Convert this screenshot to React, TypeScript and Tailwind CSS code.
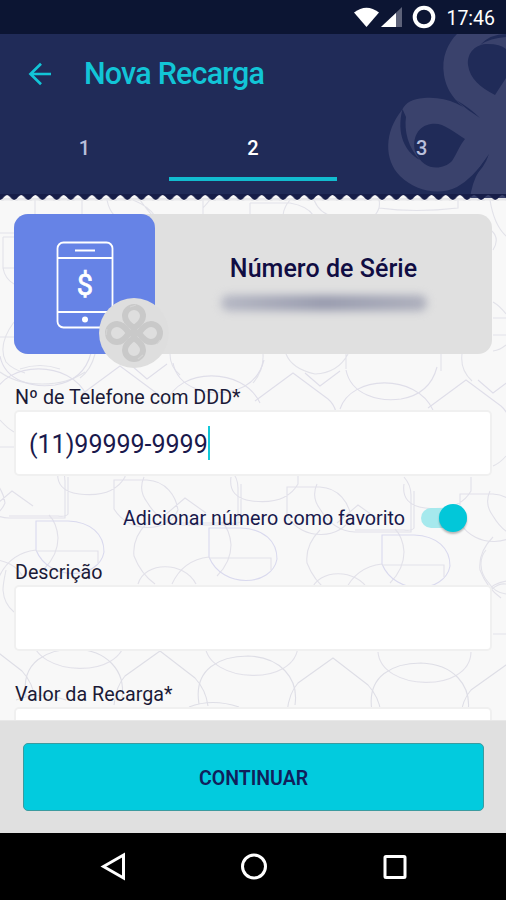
import React from "react";

const REPEATS = [-1, 0, 1, 2];

function Backdrop() {
  return (
    <svg className="h-full w-full" viewBox="0 200 506 520" fill="none" strokeWidth="1.1" aria-hidden="true">
      <g stroke="#e2e2e9">
        <path d="M35 200V215M82 200V215M107 200Q109 210 114 215M133 200Q148 206 155 216M140 200Q147 210 153 216M203 200V215M210 200L203 208" />
        <path d="M250 203H290Q307 206 313 215M250 203V215M283 215Q284 207 290 200M314 200Q320 214 333 216M379 200Q381 208 375 215M379 208Q415 213 458 208V200M490 200Q494 225 506 236M492 231Q500 239 493 250" />
        <path d="M0 233H14M3 237H14M3 237V268H14M3 268Q5 279 14 284M0 337H14M14 322Q-3 345 6 362Q12 369 25 373M20 369Q40 362 60 369M95 354Q91 370 80 378M0 372C22 388 62 388 85 372" />
        <path d="M493 302Q500 306 506 314M493 318H506M493 335H506M493 351Q500 350 506 345" />
        <path d="M170 354Q170 367 180 375M263 354Q264 370 253 383M286 354Q292 369 315 374Q338 373 348 354M346 354V369M441 354V371M462 354Q460 370 472 381" />
        <path d="M0 420Q7 428 14 432M0 447H15M493 466Q500 463 506 456M493 634H506M14 612Q4 604 3 590Q3 584 6 570M492 589Q499 583 506 584M506 594Q495 593 488 582C479 572 479 558 486 550" />
      </g>
      {REPEATS.map((k) => (
        <g key={k} transform={`translate(${k * 173} ${k * 7})`}>
          <path stroke="#dfdee9" d="M82 394L120 366L155 392Q161 397 163 405M132 366L147 379L167 364M173 363C178 388 206 395 228 392Q257 387 264 360M167 402C178 368 243 366 260 403" />
          <path stroke="#e1e0e9" d="M68 477V514Q66 517 58 516H9M58 470Q55 491 79 494Q113 498 125 477V463M114 480H147C166 481 176 496 178 510C169 532 130 535 114 509ZM144 477Q138 490 147 502Q160 524 182 525H238V488Q238 478 231 470M164 516L185 498L206 513" />
          <path stroke="#d9d9ee" d="M36 550V521H68C91 522 104 534 104 552C99 580 49 582 36 550" />
          <path stroke="#e2e1e9" d="M36 551H98V563M-1 577Q10 553 36 550M138 584C145 561 184 561 196 584M147 523Q132 538 134 556Q141 574 155 584M217 576Q231 562 231 545Q230 530 222 522M32 638C35 677 124 680 125 638" />
          <path stroke="#dedee6" d="M26 697C20 661 48 649 75 649C107 650 126 671 122 698M114 705Q116 686 125 676L160 651L195 678Q206 690 208 706M16 700Q39 691 66 700" />
        </g>
      ))}
    </svg>
  );
}

function HeaderEmblem() {
  return (
    <svg className="absolute right-0 top-0 h-[166px] w-[126px]" viewBox="380 34 126 166" aria-hidden="true">
      <path fill="#3a426c" d="M457 34H506V200H470Q471 184 480 169L488 156Q472 179 457 187C439 196 415 191 400 176C384 160 384 132 402 110C406 102 412 99 424 98C446 96 463 105 480 118C459 106 447 94 444 75C441 57 448 43 457 34Z" />
      <path fill="#202b58" d="M465 139C452 131 443 122 431 124C418 126 412 138 415 151C423 171 442 171 452 161C457 154 459 146 465 139ZM495 95C480 87 470 79 468 65C467 52 476 44 488 44Q500 44 506 49V78ZM480 45Q490 34 506 34V37Q490 38 480 45Z" />
      <path fill="#202b58" d="M402.500 109C396 134 405 152 420 160C408 148 404 130 406 117ZM456 100Q467 110 480 118Q470 108 456 100ZM489 154L473 177Q484 169 489 154Z" />
    </svg>
  );
}

function Scallops() {
  return (
    <svg className="absolute inset-x-0 top-[160px] h-[8px] w-full" viewBox="0 194 506 8" aria-hidden="true">
      <defs>
        <pattern id="teeth" x="0" y="194" width="14.15" height="8" patternUnits="userSpaceOnUse">
          <path d="M0 4H14.150V5.500Q12 8 10 6.500H4Q2 8 0 5.500Z" fill="#e7e7ea" />
          <path d="M0 6Q2.200 5.500 4.500 2.500Q7.070 -.6 9.600 2.500Q12 5.500 14.150 6V0H0Z" fill="#161d48" />
        </pattern>
      </defs>
      <rect y="194" width="506" height="8" fill="url(#teeth)" />
    </svg>
  );
}

function Clover() {
  return (
    <svg className="absolute left-[84px] top-[83px] h-[72px] w-[72px]" viewBox="-36 -36 72 72" aria-hidden="true">
      <circle r="35" fill="#dedede" />
      <g fill="none" stroke="#c9c9c9" strokeWidth="6">
        {[0, 90, 180, 270].map((a) => (
          <path key={a} transform={`rotate(${a})`} d="M0 -5Q-9 -11 -9 -17A9 9 0 1 1 9 -17Q9 -11 0 -5Z" />
        ))}
      </g>
      <path d="M-7 0L0 -7L7 0L0 7Z" fill="#c9c9c9" />
      <path d="M-4 -26L2 -28M26 7L23 11M-27 -4L-28 2M4 26L9 22" stroke="#d4d4d4" strokeWidth="1.200" />
    </svg>
  );
}

function Label({ children, className }: { children: React.ReactNode; className: string }) {
  return <div className={`h-6 whitespace-nowrap text-[19.7px] leading-[26px] ${className}`}>{children}</div>;
}

export default function App() {
  return (
    <div className="flex h-[900px] w-[506px] flex-col overflow-hidden bg-black font-['Roboto',sans-serif]">
      <div className="flex h-[34px] shrink-0 items-center justify-end bg-[#0c1533] pr-[11px] text-white">
        <svg className="mr-[9px] h-[24px] w-[84px]" viewBox="354 6 84 24" fill="#fff" aria-hidden="true">
          <path d="M355 13.500Q367.500 4 380 13.500L367.500 28Z" />
          <path d="M403 8V28H382Z" fill="#5d6279" />
          <path d="M397 14V28H382Z" />
          <circle cx="425" cy="18" r="9.300" fill="none" stroke="#fff" strokeWidth="4" />
        </svg>
        <span className="pt-[3px] text-[19.5px] leading-6">17:46</span>
      </div>

      <header className="relative z-10 h-[161px] shrink-0 bg-[#202b58]">
        <HeaderEmblem />
        <Scallops />
        <div className="relative flex h-[79px] items-center pl-[28px]">
          <svg className="h-[24px] w-[24px]" viewBox="0 0 24 24" fill="none" stroke="#12c5d7" strokeWidth="2.700" aria-hidden="true">
            <path d="M23 12H2.500M13 1.800L2.500 12L13 22.200" />
          </svg>
          <h1 className="ml-[32px] whitespace-nowrap text-[30.500px] font-medium leading-9 tracking-[-0.8px] text-[#12c5d7]">Nova Recarga</h1>
        </div>
        <nav className="relative grid h-[68px] grid-cols-3 text-center text-xl font-medium leading-[70px] text-[#b9bfdb]">
          <span>1</span>
          <span className="h-[68px] border-b-4 border-[#12bccf] text-white">2</span>
          <span>3</span>
        </nav>
      </header>

      <main className="relative h-[525px] shrink-0 overflow-hidden bg-[#f8f8f8] pt-[5px]">
        <div className="absolute inset-x-0 bottom-0 top-[5px]"><Backdrop /></div>
        <div className="relative flex flex-col px-[14px] pt-[14px]">
          <section className="relative flex h-[140px] rounded-[14px] bg-[#e0e0e0]">
            <div className="h-full w-[141px] rounded-[14px] bg-[#6683e6]">
              <svg className="ml-[42px] mt-[27px] h-[88px] w-[58px]" viewBox="56 241 58 88" fill="none" stroke="#fff" strokeWidth="1.800" aria-hidden="true">
                <rect x="57.500" y="242.500" width="55" height="85" rx="6" />
                <path d="M57 258H113M57 312H113M75 250.500H95" />
                <circle cx="85" cy="319.500" r="3" fill="#fff" stroke="none" />
                <text x="85" y="294.500" textAnchor="middle" fontFamily="Roboto" fontSize="29" fill="#fff" strokeWidth=".7">$</text>
              </svg>
            </div>
            <div className="flex flex-1 flex-col items-center pt-[41px]">
              <h2 className="whitespace-nowrap text-[25px] font-medium leading-7 tracking-[0.05px] text-[#100d43]">Número de Série</h2>
              <div className="mt-[12px] h-[16px] w-[206px] rounded-full bg-gradient-to-r from-[#b6b8c4] via-[#989bae] to-[#aeb0bd] blur-[4px]" />
            </div>
            <Clover />
          </section>

          <Label className="ml-px mt-[31px] text-[#1b1a37]">Nº de Telefone com DDD*</Label>
          <div className="mt-px flex h-[66px] items-center rounded-[5px] border-2 border-[#f0f0f0] bg-white pl-[13px]">
            <span className="whitespace-nowrap pt-[3px] text-[25px] leading-8 text-[#19194c]">(11)99999-9999</span>
            <span className="h-[34px] w-[2px] bg-[#12c8d9]" />
          </div>

          <div className="mt-[28px] flex h-[28px] items-center justify-end pr-[25px]">
            <Label className="mr-[16px] text-[#19194c]">Adicionar número como favorito</Label>
            <div className="flex h-[20px] w-[46px] items-center justify-end rounded-full bg-[#a6e9ed]">
              <span className="h-7 w-7 shrink-0 rounded-full bg-[#02c7d9] shadow-[0_2px_2px_rgba(0,0,0,0.25)]" />
            </div>
          </div>

          <Label className="ml-px mt-[28px] text-[#1b1a37]">Descrição</Label>
          <div className="mt-px h-[66px] rounded-[5px] border-2 border-[#f0f0f0] bg-white" />
          <Label className="ml-px mt-[31px] text-[#1b1a37]">Valor da Recarga*</Label>
          <div className="mt-px h-[66px] shrink-0 rounded-[5px] border-2 border-[#f0f0f0] bg-white" />
        </div>
      </main>

      <footer className="h-[113px] shrink-0 border-t border-[#e8e8e8] bg-[#e0e0e0] pl-[23px] pr-[22px] pt-[22px]">
        <button className="block h-[68px] w-full rounded-[5px] border border-[#3b9b9f] bg-[#02cbde] text-[19.5px] font-semibold leading-[69px] text-[#10205b]">CONTINUAR</button>
      </footer>

      <div className="h-[67px] shrink-0 bg-black">
        <svg className="h-full w-full" viewBox="0 833 506 67" fill="none" stroke="#fff" strokeWidth="3" aria-hidden="true">
          <path d="M103.500 866.500L123.500 855V878Z" />
          <circle cx="254" cy="866.500" r="11.500" />
          <rect x="385" y="856.500" width="20" height="21" rx="1" />
        </svg>
      </div>
    </div>
  );
}
